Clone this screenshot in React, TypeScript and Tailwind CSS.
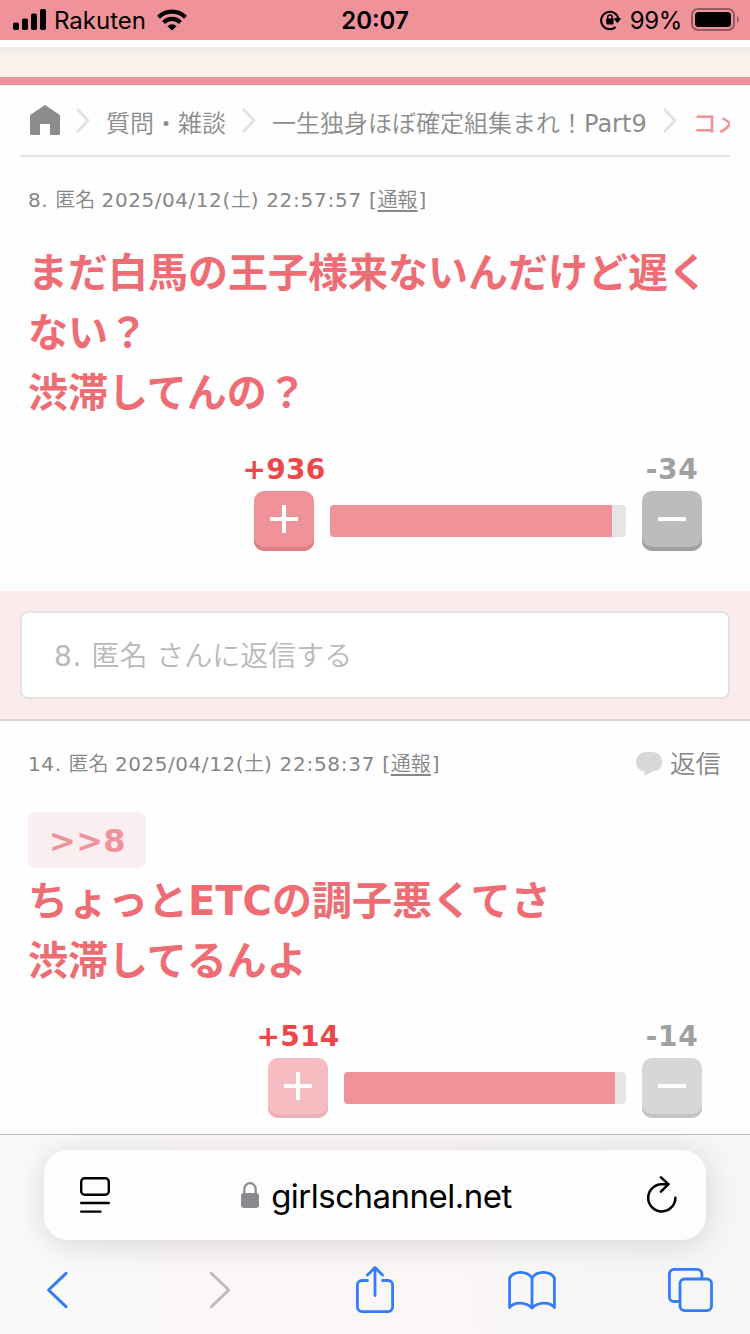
import React from "react";

const jpFont = "font-['DejaVu_Sans','Noto_Sans_CJK_JP',sans-serif]";
const uiFont = "font-['Inter',sans-serif]";

function StatusBar() {
  return (
    <header className={`flex h-10 shrink-0 items-center bg-[#f0929a] text-black ${uiFont}`}>
      <div className="flex w-[250px] items-center pl-[13px]">
        <svg width="34" height="22" viewBox="0 0 34 22" fill="#000">
          <rect x="0" y="13.5" width="6" height="7.5" rx="1.8" />
          <rect x="9" y="9.5" width="6" height="11.5" rx="1.8" />
          <rect x="18" y="4.5" width="6" height="16.5" rx="1.8" />
          <rect x="27" y="0" width="6" height="21" rx="1.8" />
        </svg>
        <span className="ml-[7px] pt-0.5 text-[24px] leading-[38px]">Rakuten</span>
        <svg className="ml-[11px]" width="30" height="22" viewBox="0 0 30 22" fill="none" stroke="#000" strokeWidth="4.2">
          <path d="M1.5 8.2a19.2 19.2 0 0 1 27 0" />
          <path d="M6.6 13.4a12 12 0 0 1 16.8 0" />
          <path d="M15 21.6l-4.6-4.4a6.6 6.6 0 0 1 9.2 0z" fill="#000" stroke="none" />
        </svg>
      </div>
      <div className="w-[250px] pt-0.5 text-center text-[24px] font-semibold leading-[38px]">20:07</div>
      <div className="flex w-[250px] items-center justify-end pr-[10px]">
        <svg width="22" height="20" viewBox="0 0 22 20" fill="none" stroke="#000" strokeWidth="2">
          <path d="M15.6 17A8.7 8.7 0 1 1 18.4 9" />
          <path d="M13.5 8.2h7.8l-3.9 5z" fill="#000" stroke="none" />
          <rect x="6.2" y="8.6" width="7.4" height="5.8" rx="0.8" fill="#000" stroke="none" />
          <path d="M7.7 9V7.3a2.2 2.2 0 0 1 4.4 0V9" strokeWidth="1.5" />
        </svg>
        <span className="ml-2 pt-0.5 text-[24px] leading-[38px] tracking-[-0.4px]">99%</span>
        <svg className="ml-[9px]" width="49" height="24" viewBox="0 0 49 24" fill="none">
          <rect x="1" y="1" width="42" height="21" rx="6" stroke="#93595f" strokeWidth="2" />
          <rect x="4" y="4" width="36" height="15" rx="3.5" fill="#000" />
          <path d="M46 8.2c2.4 1.1 2.4 5.5 0 6.6z" fill="#93595f" />
        </svg>
      </div>
    </header>
  );
}

function Chevron() {
  return (
    <svg className="shrink-0" width="14" height="25" viewBox="0 0 14 25" fill="none" stroke="#e3e3e3" strokeWidth="3" strokeLinecap="round" strokeLinejoin="round">
      <path d="M1.8 1.8L12 12.5L1.8 23.2" />
    </svg>
  );
}

function Breadcrumb() {
  return (
    <nav className="mx-5 flex h-[72px] shrink-0 items-center overflow-hidden whitespace-nowrap border-b-2 border-[#e3e3e3] pl-[10px] text-[24px] leading-[36px] text-[#8b8d8c]">
      <svg className="shrink-0" width="30" height="30" viewBox="0 0 30 30" fill="#8b8d8c">
        <path d="M15 0L29.2 9.6Q30 10.2 30 11V28.5Q30 30 28.5 30H20V19H10V30H1.500Q0 30 0 28.5V11Q0 10.200 0.800 9.600Z" />
      </svg>
      <span className="ml-4"><Chevron /></span>
      <span className="ml-4 mt-2 font-[350]">質問・雑談</span>
      <span className="ml-4"><Chevron /></span>
      <span className="ml-4 mt-2 font-[350]">一生独身ほぼ確定組集まれ！<span className="font-normal">Part9</span></span>
      <span className="ml-4"><Chevron /></span>
      <span className="ml-4 mt-2 font-medium text-[#f0929a]">コメント</span>
    </nav>
  );
}

function Meta({ no, time }: { no: string; time: string }) {
  return (
    <div className="flex whitespace-pre text-[20px] leading-[30px] text-[#868686]">
      <span className="tracking-[0.6px]">{no}. </span>
      <span className="font-[350]">匿名 </span>
      <span className="tracking-[0.55px]">2025/04/12(</span>
      <span className="font-[350]">土</span>
      <span className="tracking-[0.6px]">) </span>
      <span className="tracking-[0.75px]">{time}</span>
      <span className="tracking-[0.7px]"> [</span>
      <span className="font-[350] underline decoration-2 underline-offset-[3px]">通報</span>
      <span className="pl-px">]</span>
    </div>
  );
}

type VoteProps = { plus: number; minus: number; fill: string; voted?: boolean };

function VoteButton({ kind, muted }: { kind: "plus" | "minus"; muted?: boolean }) {
  const tone =
    kind === "plus"
      ? "bg-[#f0929a] shadow-[inset_0_-4px_0_#df7e87]"
      : "bg-[#bcbcbc] shadow-[inset_0_-4px_0_#a0a0a0]";
  return (
    <button className={`flex h-[60px] w-[60px] items-center justify-center rounded-[10px] pb-1 ${tone} ${muted ? "opacity-60" : ""}`}>
      <svg width="28" height="28" viewBox="0 0 28 28" fill="#fff">
        <rect x="0" y="12" width="28" height="4" />
        {kind === "plus" && <rect x="12" y="0" width="4" height="28" />}
      </svg>
    </button>
  );
}

function Votes({ plus, minus, fill, voted }: VoteProps) {
  return (
    <div className="flex justify-end pr-5 text-[28px] font-bold leading-[42px]">
      <div className="flex w-[60px] flex-col items-center">
        <span className="tracking-[0.3px] text-[#ec484b]">+{plus}</span>
        <VoteButton kind="plus" muted={voted} />
      </div>
      <div className={`mx-4 mt-14 h-8 overflow-hidden rounded-[4px] bg-[#e6e6e6] ${voted ? "w-[282px]" : "w-[296px]"}`}>
        <div className="h-full bg-[#f0929a]" style={{ width: fill }} />
      </div>
      <div className="flex w-[60px] flex-col items-center">
        <span className="tracking-[0.7px] text-[#a0a0a0]">-{minus}</span>
        <VoteButton kind="minus" muted={voted} />
      </div>
    </div>
  );
}

function Toolbar() {
  return (
    <footer className={`h-[200px] shrink-0 border-t border-[#bbb] bg-[linear-gradient(90deg,#fafafa,#faf7f6_25%,#faf7f6_60%,#f6f6f7)] ${uiFont}`}>
      <div className="mx-[44px] mt-[15px] flex h-[90px] items-center rounded-[24px] bg-[#fdfdfd] pl-9 pr-[28px] shadow-[0_4px_32px_rgba(0,0,0,0.14)]">
        <svg width="30" height="36" viewBox="0 0 30 36" fill="none" stroke="#000" strokeWidth="2.4" strokeLinecap="round">
          <rect x="1.2" y="1.2" width="27.6" height="16.6" rx="3.5" />
          <path d="M1.200 26H28.800M1.200 34.600H20.500" />
        </svg>
        <div className="flex flex-1 items-center justify-center pr-[3px]">
          <svg width="18" height="27" viewBox="0 0 18 27">
            <path d="M3.300 12V7.200a5.700 6 0 0 1 11.400 0V12" fill="none" stroke="#8a898e" strokeWidth="2.2" />
            <rect x="0" y="11" width="18" height="15" rx="3" fill="#8a898e" />
          </svg>
          <span className="ml-[12px] pt-0.5 text-[33px] leading-[40px] tracking-[-0.5px] text-black">girlschannel.net</span>
        </div>
        <svg width="32" height="38" viewBox="0 0 32 38" fill="none" stroke="#000" strokeWidth="2.500" strokeLinecap="round" strokeLinejoin="round">
          <path d="M22.200 8.200H16A13.600 13.600 0 1 0 29.400 21.800" />
          <path d="M15 1.400L22.400 8.200L15 15.700" />
        </svg>
      </div>
      <div className="flex h-[94px] items-center pl-[46px] pr-[36px] pt-[5px]">
        <svg width="22" height="38" viewBox="0 0 22 38" fill="none" stroke="#327cf8" strokeWidth="3" strokeLinecap="round" strokeLinejoin="round">
          <path d="M20 2.400L2.600 19L20 35.600" />
        </svg>
        <svg className="ml-[141px]" width="22" height="38" viewBox="0 0 22 38" fill="none" stroke="#bdbdbe" strokeWidth="3" strokeLinecap="round" strokeLinejoin="round">
          <path d="M2.400 2.400L19.800 19L2.400 35.600" />
        </svg>
        <svg className="ml-[124px]" width="40" height="48" viewBox="0 0 40 48" fill="none" stroke="#327cf8" strokeWidth="2.800" strokeLinecap="round" strokeLinejoin="round">
          <path d="M12.500 14.500H7a4.600 4.600 0 0 0-4.600 4.600V41a4.600 4.600 0 0 0 4.600 4.600H33A4.600 4.600 0 0 0 37.600 41V19.100A4.600 4.600 0 0 0 33 14.500H27.500" />
          <path d="M20 29.500V2M12.500 9L20 1.600L27.500 9" />
        </svg>
        <svg className="ml-[112px]" width="50" height="40" viewBox="0 0 50 40" fill="none" stroke="#327cf8" strokeWidth="2.800" strokeLinejoin="round">
          <path d="M25 8C20 0.500 7 0.500 2.600 8V37.500C7 31.500 19 31.500 25 38C31 31.500 43 31.500 47.400 37.500V8C43 0.500 30 0.500 25 8ZV38" />
        </svg>
        <svg className="ml-auto" width="46" height="44" viewBox="0 0 46 44" fill="none" stroke="#327cf8" strokeWidth="2.800">
          <path d="M11 33.500H6A4.600 4.600 0 0 1 1.400 28.900V6A4.600 4.600 0 0 1 6 1.400H29.300A4.600 4.600 0 0 1 33.900 6V11" />
          <rect x="12" y="11" width="31.500" height="31.600" rx="4.600" />
        </svg>
      </div>
    </footer>
  );
}

export default function App() {
  return (
    <div className={`flex h-[1334px] w-[750px] flex-col overflow-hidden bg-[#fefefe] ${jpFont}`}>
      <StatusBar />
      <div className="h-[7px] shrink-0 bg-white" />
      <div className="h-[30px] shrink-0 bg-[linear-gradient(#edebe8,#f9f1ec_8px)]" />
      <div className="h-2 shrink-0 bg-[#f0929a]" />
      <Breadcrumb />

      <article className="h-[434px] shrink-0 px-7 pt-[28px]">
        <Meta no="8" time="22:57:57" />
        <p className="mt-[28px] text-[40px] font-bold leading-[60px] text-[#ee6d75]">
          まだ白馬の王子様来ないんだけど遅く<br />ない？<br />渋滞してんの？
        </p>
        <div className="mt-[26px]"><Votes plus={936} minus={34} fill="95.3%" /></div>
      </article>

      <section className="h-[130px] shrink-0 border-b-2 border-[#d8d5d6] bg-[#fbebeb] px-5 pt-5">
        <div className="flex h-[88px] items-center whitespace-pre rounded-lg border-2 border-[#e2e2e2] bg-white pl-8 pt-1 text-[28px] text-[#b9b9b9]">
          <span className="tracking-[0.6px]">8. </span>
          <span className="font-[350]">匿名 さんに返信する</span>
        </div>
      </section>

      <article className="h-[413px] shrink-0 px-7 pt-[28px]">
        <div className="flex items-start">
          <Meta no="14" time="22:58:37" />
          <div className="mr-px ml-auto flex h-[30px] items-center text-[25.500px] font-[350] text-[#868686]">
            <svg className="mr-2" width="26" height="24" viewBox="0 0 26 24" fill="#d8d8d8">
              <path d="M10 0H16C22 0 26 4 26 10S22 19.500 16 19.500C14 21.500 11 22.500 7.500 23.300C8.500 22 8.800 20.500 8.500 19.300C3 18.500 0 15 0 10S4 0 10 0Z" />
            </svg>
            返信
          </div>
        </div>
        <div className="mt-[33px] flex h-14 w-[118px] items-center justify-center rounded-lg bg-[#fbeef1] pl-px pt-0.5 text-[32px] font-bold tracking-[0.3px] text-[#f0929a]">&gt;&gt;8</div>
        <p className="mt-[3px] text-[40px] font-bold leading-[60px] text-[#ee6d75]">
          ちょっとETCの調子悪くてさ<br />渋滞してるんよ
        </p>
        <div className="mt-[25px]"><Votes plus={514} minus={14} fill="96.1%" voted /></div>
      </article>
      <Toolbar />
    </div>
  );
}
